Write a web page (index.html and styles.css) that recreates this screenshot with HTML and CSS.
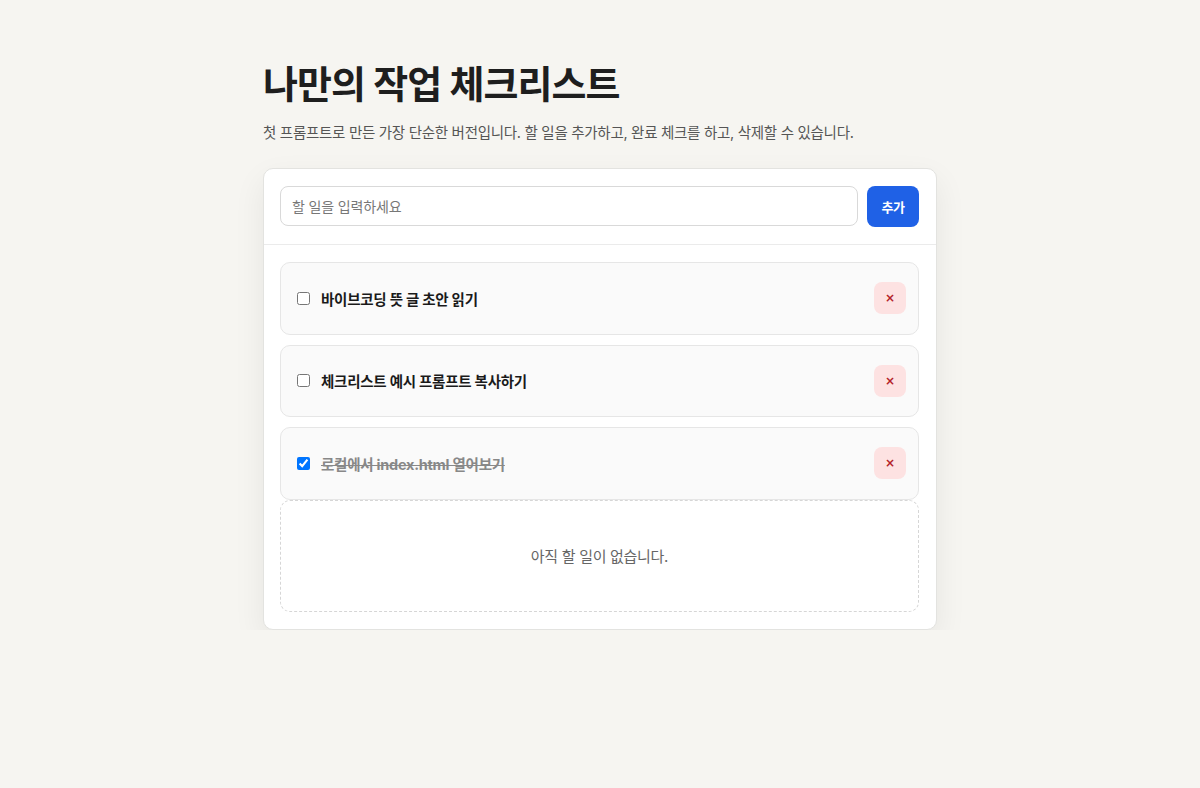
FILE: index.html
```html
<!DOCTYPE html>
<html lang="ko">
<head>
<meta charset="utf-8">
<title>나만의 작업 체크리스트</title>
<link rel="stylesheet" href="styles.css">
</head>
<body>
<main class="page">
  <h1 class="title">나만의 작업 체크리스트</h1>
  <p class="subtitle">첫 프롬프트로 만든 가장 단순한 버전입니다. 할 일을 추가하고, 완료 체크를 하고, 삭제할 수 있습니다.</p>
  <section class="card">
    <form class="add-row">
      <input class="add-input" type="text" placeholder="할 일을 입력하세요">
      <button class="add-btn" type="button">추가</button>
    </form>
    <div class="list-wrap">
      <ul class="todo-list">
        <li class="todo">
          <label class="todo-label"><input type="checkbox" class="todo-check"><span class="todo-text">바이브코딩 뜻 글 초안 읽기</span></label>
          <button class="del-btn" type="button">×</button>
        </li>
        <li class="todo">
          <label class="todo-label"><input type="checkbox" class="todo-check"><span class="todo-text">체크리스트 예시 프롬프트 복사하기</span></label>
          <button class="del-btn" type="button">×</button>
        </li>
        <li class="todo done">
          <label class="todo-label"><input type="checkbox" class="todo-check" checked><span class="todo-text">로컬에서 index.html 열어보기</span></label>
          <button class="del-btn" type="button">×</button>
        </li>
      </ul>
      <div class="empty">아직 할 일이 없습니다.</div>
    </div>
  </section>
</main>
</body>
</html>
```
FILE: styles.css
```css
* { box-sizing: border-box; }
html, body { margin: 0; padding: 0; }
body {
  background: #f6f5f1;
  font-family: Inter, "Noto Sans CJK KR", sans-serif;
  color: #1f1f1f;
}
.page {
  width: 674px;
  margin: 0 auto;
  padding-top: 61px;
}
.title {
  margin: 0;
  font-size: 38px;
  line-height: 46px;
  font-weight: 700;
  letter-spacing: -0.024em;
  color: #1e1e1e;
}
.subtitle {
  margin: 14px 0 0;
  font-size: 14.5px;
  line-height: 24px;
  letter-spacing: -0.02em;
  color: #555;
}
.card {
  margin-top: 23px;
  background: #fff;
  border: 1px solid #e3e3e0;
  border-radius: 10px;
  box-shadow: 0 12px 32px rgba(0, 0, 0, 0.07);
}
.add-row {
  display: flex;
  gap: 9px;
  margin: 0;
  padding: 17px 17px 17px 16px;
  border-bottom: 1px solid #ebebeb;
}
.add-input {
  flex: 1;
  height: 40px;
  padding: 0 11px;
  border: 1px solid #d9d9d9;
  border-radius: 8px;
  font-family: inherit;
  font-size: 14px;
  letter-spacing: -0.01em;
  color: #222;
  outline: none;
}
.add-input::placeholder { color: #777; }
.add-btn {
  width: 52px;
  height: 41px;
  border: 0;
  border-radius: 8px;
  background: #1f61e6;
  color: #fff;
  font-family: inherit;
  font-size: 13px;
  font-weight: 700;
  letter-spacing: -0.03em;
}
.list-wrap {
  padding: 17px 17px 17px 16px;
}
.todo-list {
  list-style: none;
  margin: 0;
  padding: 0;
  display: flex;
  flex-direction: column;
  gap: 10px;
}
.todo {
  display: flex;
  align-items: center;
  justify-content: space-between;
  min-height: 72.5px;
  padding: 0 12px;
  background: #fafafa;
  border: 1px solid #e6e6e6;
  border-radius: 10px;
}
.todo-label {
  display: flex;
  align-items: center;
  gap: 11px;
}
.todo-check { margin: 0 0 0 4px; width: 13px; height: 13px; }
.todo-text {
  font-size: 14.5px;
  font-weight: 700;
  letter-spacing: -0.017em;
  color: #1a1a1a;
}
.done .todo-text {
  color: #888;
  text-decoration: line-through;
}
.del-btn {
  width: 32px;
  height: 32px;
  border: 0;
  border-radius: 8px;
  background: #fde2e2;
  color: #b4232a;
  font-family: "DejaVu Sans", sans-serif;
  font-size: 12px;
  font-weight: 700;
  padding: 0;
}
.empty {
  height: 112px;
  display: flex;
  align-items: center;
  justify-content: center;
  border: 1px dashed #d6d6d6;
  border-radius: 10px;
  font-size: 15px;
  letter-spacing: -0.02em;
  color: #666;
}
```
